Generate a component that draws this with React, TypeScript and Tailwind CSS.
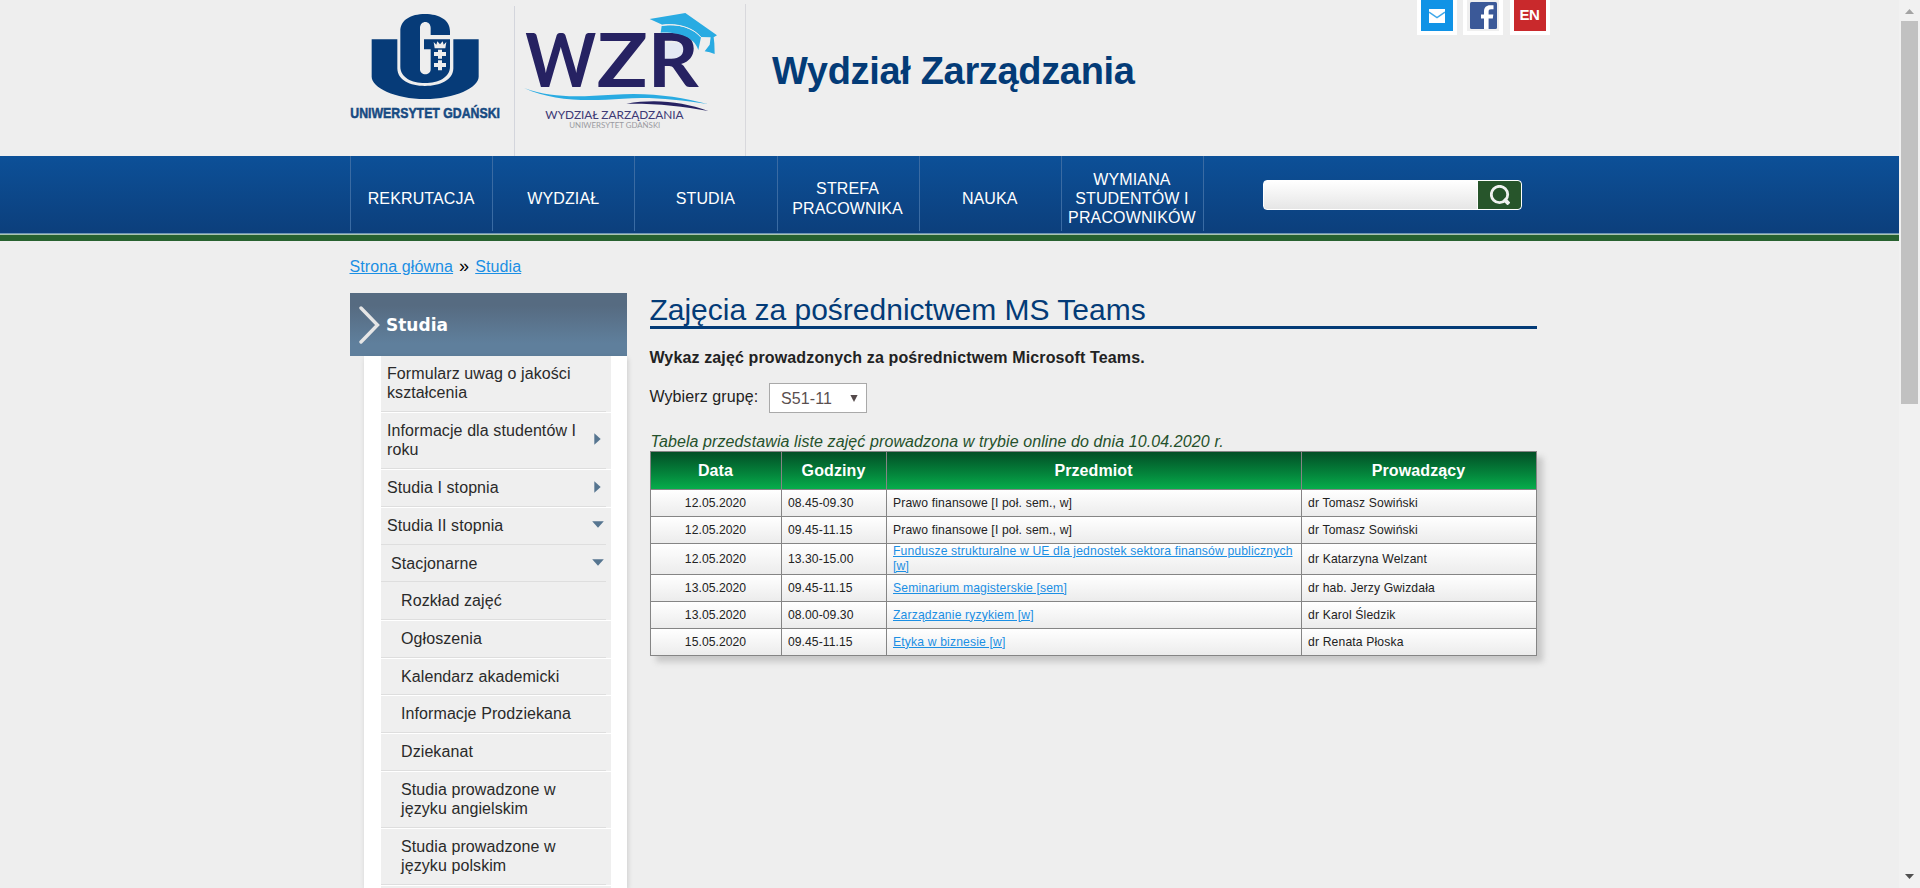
import React from "react";

const navItems = [
  "REKRUTACJA",
  "WYDZIAŁ",
  "STUDIA",
  "STREFA PRACOWNIKA",
  "NAUKA",
  "WYMIANA STUDENTÓW I PRACOWNIKÓW",
];

type MenuItem = { label: string; level: 1 | 2 | 3; arrow?: "right" | "down"; flush?: boolean };

const menu: MenuItem[] = [
  { label: "Formularz uwag o jakości kształcenia", level: 1 },
  { label: "Informacje dla studentów I roku", level: 1, arrow: "right" },
  { label: "Studia I stopnia", level: 1, arrow: "right" },
  { label: "Studia II stopnia", level: 1, arrow: "down", flush: true },
  { label: "Stacjonarne", level: 2, arrow: "down", flush: true },
  { label: "Rozkład zajęć", level: 3 },
  { label: "Ogłoszenia", level: 3 },
  { label: "Kalendarz akademicki", level: 3 },
  { label: "Informacje Prodziekana", level: 3 },
  { label: "Dziekanat", level: 3 },
  { label: "Studia prowadzone w języku angielskim", level: 3 },
  { label: "Studia prowadzone w języku polskim", level: 3 },
];

const indent = { 1: "pl-[6px]", 2: "pl-[10px]", 3: "pl-[20px]" };

type Lesson = { date: string; time: string; subject: string; teacher: string; link?: boolean };

const lessons: Lesson[] = [
  { date: "12.05.2020", time: "08.45-09.30", subject: "Prawo finansowe [I poł. sem., w]", teacher: "dr Tomasz Sowiński" },
  { date: "12.05.2020", time: "09.45-11.15", subject: "Prawo finansowe [I poł. sem., w]", teacher: "dr Tomasz Sowiński" },
  { date: "12.05.2020", time: "13.30-15.00", subject: "Fundusze strukturalne w UE dla jednostek sektora finansów publicznych [w]", teacher: "dr Katarzyna Welzant", link: true },
  { date: "13.05.2020", time: "09.45-11.15", subject: "Seminarium magisterskie [sem]", teacher: "dr hab. Jerzy Gwizdała", link: true },
  { date: "13.05.2020", time: "08.00-09.30", subject: "Zarządzanie ryzykiem [w]", teacher: "dr Karol Śledzik", link: true },
  { date: "15.05.2020", time: "09.45-11.15", subject: "Etyka w biznesie [w]", teacher: "dr Renata Płoska", link: true },
];

function UniversityLogo() {
  return (
    <svg className="block h-[130px] w-[154px]" viewBox="30 0 462 390">
      <path d="M95 118H172V205C172 240 210 258 255 258C300 258 340 240 340 205V118H416V230C416 262 345 297 255 297C165 297 95 262 95 230Z" fill="#063b78" />
      <path d="M181 200V94C181 60 212 42 255 42C298 42 330 60 330 94V105H272V84C272 60 240 60 240 84V208C240 228 272 228 272 208V148H252V118H330V200C330 232 295 249 255 249C215 249 181 232 181 200Z" fill="#063b78" />
      <g fill="#eeeeee">
        <path d="M281 126L289 134L292 124L300 133L308 124L311 134L319 126L316 145H284Z" />
        <path d="M294 149H306V156H318V168H306V176H294V168H282V156H294Z" />
        <path d="M294 181H306V189H318V201H306V211H294V201H282V189H294Z" />
      </g>
      <text x="31" y="355" textLength="449" lengthAdjust="spacingAndGlyphs" fill="#174a82" stroke="#174a82" strokeWidth="1.6" fontFamily="Liberation Sans, sans-serif" fontWeight="700" fontSize="46">
        UNIWERSYTET GDAŃSKI
      </text>
    </svg>
  );
}

function FacultyLogo() {
  return (
    <svg className="block h-[130px] w-[190px]" viewBox="550 0 570 390" overflow="visible">
      <path d="M965 128H1010C1045 128 1045 182 1010 182H965Z" fill="#e4e9f4" />
      <g fill="#262262" fontFamily="Lato, sans-serif" fontWeight="700" fontSize="221">
        <text x="557" y="261" textLength="213" lengthAdjust="spacingAndGlyphs">W</text>
        <text x="771" y="261" textLength="153" lengthAdjust="spacingAndGlyphs">Z</text>
        <text x="924" y="261" textLength="153" lengthAdjust="spacingAndGlyphs">R</text>
      </g>
      <g fill="#29abe2">
        <path d="M930 57L1037 39L1132 106L1122 112L1124 130L1125 162L1110 157L1095 154L1110 134L1113 112L1084 111C1062 84 1015 68 968 74Z" />
        <path d="M966 78C1012 70 1062 84 1084 112L1076 150C1066 118 1030 96 963 98Z" />
      </g>
      <path d="M967 76C1014 68 1062 84 1084 112" fill="none" stroke="#eeeeee" strokeWidth="3" />
      <path d="M553 264C640 296 720 290 820 284C930 276 1020 290 1104 312C1010 298 930 290 850 296C740 304 640 304 553 264Z" fill="#29abe2" />
      <path d="M860 311C950 296 1030 306 1106 333C1030 318 950 310 860 311Z" fill="#262262" />
      <text x="617" y="356" textLength="415" lengthAdjust="spacingAndGlyphs" fill="#3d3975" fontFamily="Lato, sans-serif" fontSize="36">
        WYDZIAŁ ZARZĄDZANIA
      </text>
      <text x="689" y="384" textLength="273" lengthAdjust="spacingAndGlyphs" fill="#9a9a9f" fontFamily="Lato, sans-serif" fontSize="23">
        UNIWERSYTET GDAŃSKI
      </text>
    </svg>
  );
}

function Header() {
  return (
    <header className="ml-[350px] flex h-[156px] w-[1200px] items-start">
      <div className="flex h-full w-[164px]">
        <UniversityLogo />
      </div>
      <div className="mt-[6px] h-[150px] w-px bg-[#d3d5dc]" />
      <div className="flex h-full w-[230px] pl-[8px]">
        <FacultyLogo />
      </div>
      <div className="mt-[4px] h-[152px] w-px bg-[#d8d8dc]" />
      <h1 className="mt-[49px] ml-[26px] text-[38px] leading-[44px] font-bold tracking-[-0.33px] whitespace-nowrap text-[#033b77]">
        Wydział Zarządzania
      </h1>
      <div className="ml-auto flex">
        <a className="block h-[35px] w-[40px] bg-white px-[4px] pb-[4px]">
          <span className="flex h-[31px] items-center justify-center bg-[#1093e6]">
            <svg className="h-[14px] w-[16px]" viewBox="0 0 16 14">
              <rect width="16" height="14" fill="#fff" />
              <path d="M0 3.2L8 8.6L16 3.2" fill="none" stroke="#3ea8ea" strokeWidth="1.5" />
            </svg>
          </span>
        </a>
        <a className="ml-[6px] block h-[35px] w-[40px] bg-white px-[4px] pb-[4px]">
          <span className="flex h-[31px] justify-center bg-[#efefef] pt-[2px]">
            <svg className="h-[27px] w-[27px]" viewBox="0 0 27 27">
              <rect width="27" height="27" rx="1.5" fill="#3b5998" />
              <path d="M14 27V16.5H11V12.5H14V9.5C14 5.5 16.5 3.3 20 3.3H23.5V7.3H21C19.3 7.3 18.6 8 18.6 9.7V12.5H23.3L22.8 16.5H18.6V27Z" fill="#fff" />
            </svg>
          </span>
        </a>
        <a className="ml-[7px] block h-[35px] w-[40px] bg-white px-[4px] pb-[4px]">
          <span className="flex h-[31px] items-center justify-center bg-[#c9292c] pr-px text-[15px] font-bold tracking-[-0.3px] text-white">EN</span>
        </a>
      </div>
    </header>
  );
}

function NavBar() {
  return (
    <nav className="flex h-[85px] flex-col">
      <div className="flex h-[77px] bg-linear-to-b from-[#0c5098] to-[#0c3f7c] pl-[350px]">
        <div className="flex h-[75px] w-[854px] border-l border-[#3a6ba3]">
          {navItems.map((item) => (
            <a key={item} className="flex flex-1 items-center justify-center border-r border-[#3a6ba3] pt-[10px] pr-px text-center text-[16px] leading-[19.2px] tracking-[0.13px] text-white">
              {item}
            </a>
          ))}
        </div>
        <form className="mt-[24px] ml-[59px] flex h-[30px] w-[259px] overflow-hidden rounded-[4px] border border-white bg-linear-to-b from-white to-[#e6e6e6]">
          <div className="w-[214px] border-r border-white" />
          <button type="button" className="flex flex-1 items-center justify-center rounded-r-[3px] bg-[#27552b]">
            <svg className="h-[20px] w-[20px]" viewBox="0 0 20 20" fill="none" stroke="#f0f2f0">
              <circle cx="9.5" cy="9.5" r="8.2" strokeWidth="2.8" />
              <path d="M14 14L19 19" strokeWidth="4" />
            </svg>
          </button>
        </form>
      </div>
      <div className="h-px bg-[#6d94b4]" />
      <div className="h-px bg-[#a9c4ad]" />
      <div className="h-[6px] bg-[#27612f]" />
    </nav>
  );
}

function Arrow({ dir }: { dir: "right" | "down" }) {
  return dir === "right" ? (
    <svg className="mt-[-2px] mr-[5px] h-[12px] w-[7px] shrink-0" viewBox="0 0 7 12">
      <path d="M0.3 0.3L6.7 6L0.3 11.7Z" fill="#567590" />
    </svg>
  ) : (
    <svg className="mt-[-2px] mr-[2.5px] h-[7px] w-[12px] shrink-0" viewBox="0 0 12 7">
      <path d="M0.2 0.3H11.8L6 6.7Z" fill="#567590" />
    </svg>
  );
}

function Sidebar() {
  return (
    <aside className="w-[277px] shrink-0">
      <div className="flex h-[63px] items-center bg-linear-to-b from-[#566b81] from-20% to-[#5f7f9c] to-80% pl-[9px]">
        <svg className="h-[38px] w-[21px]" viewBox="0 0 21 38">
          <path d="M2 2L18.5 19L2 36" fill="none" stroke="#e6e6e6" strokeWidth="3.4" strokeLinecap="round" />
        </svg>
        <h2 className="mt-[2px] ml-[6px] font-['DejaVu_Sans'] text-[17px] font-bold text-white">Studia</h2>
      </div>
      <ul className="ml-[14px] h-[532px] overflow-hidden bg-white pr-[16px] pl-[17px] shadow-[1px_2px_5px_rgba(0,0,0,0.14)]">
        {menu.map((m, i) => (
          <li key={m.label} className={`flex border-b bg-[#efefef] ${m.flush ? "border-[#efefef]" : "border-white"} ${i === 0 ? "pb-[0.3px]" : ""}`}>
            <a className={`flex w-[225px] items-center justify-between border-b border-[#dedede] pt-[8px] pb-[8.5px] text-[16px] leading-[19.2px] tracking-[0.09px] text-[#2a2a2a] ${indent[m.level]}`}>
              <span className="max-w-[194px]">{m.label}</span>
              {m.arrow && <Arrow dir={m.arrow} />}
            </a>
          </li>
        ))}
        <li className="h-[38px] bg-[#efefef]" />
      </ul>
    </aside>
  );
}

const cell = "border-r border-b border-[#858585] py-0 align-middle";

function Schedule() {
  return (
    <table className="w-[887px] table-fixed border-separate border-spacing-0 border-t border-l border-[#858585] shadow-[6px_6px_6px_#c8c8c8]">
      <colgroup>
        <col className="w-[131px]" />
        <col className="w-[105px]" />
        <col className="w-[415px]" />
        <col className="w-[235px]" />
      </colgroup>
      <thead>
        <tr className="h-[38px] text-[16px] leading-[19.2px] font-bold tracking-[0.1px] text-white">
          {["Data", "Godziny", "Przedmiot", "Prowadzący"].map((h) => (
            <th key={h} className={`${cell} bg-linear-to-b from-[#024f26] to-[#06ad4b] pr-px`}>{h}</th>
          ))}
        </tr>
      </thead>
      <tbody className="text-[12.16px] leading-[14.6px] tracking-[0.15px] text-[#222]">
        {lessons.map((l, i) => (
          <tr key={i} className={i === 2 ? "h-[31px]" : "h-[27px]"}>
            <td className={`${cell} bg-linear-to-b from-white to-[#ececec] pr-px text-center tracking-[0.05px]`}>{l.date}</td>
            <td className={`${cell} bg-linear-to-b from-white to-[#ececec] pl-[6px] tracking-[0.05px]`}>{l.time}</td>
            <td className={`${cell} bg-linear-to-b from-white to-[#ececec] pr-[5px] pl-[6px]`}>
              {l.link ? <a className="text-[#1b8fe4] underline">{l.subject}</a> : l.subject}
            </td>
            <td className={`${cell} bg-linear-to-b from-white to-[#ececec] pl-[6px]`}>{l.teacher}</td>
          </tr>
        ))}
      </tbody>
    </table>
  );
}

function Main() {
  return (
    <main className="ml-[23px] w-[887px] text-[16px] leading-[19px] text-[#222]">
      <h2 className="h-[36px] border-b-3 border-[#033b77] text-[30px] leading-[34px] text-[#033b77]">
        <span className="-ml-[0.6px]">Zajęcia za pośrednictwem MS Teams</span>
      </h2>
      <p className="mt-[19px] -ml-[0.6px] font-bold tracking-[0.135px]">Wykaz zajęć prowadzonych za pośrednictwem Microsoft Teams.</p>
      <div className="mt-[16px] flex h-[30px]">
        <label className="mt-[4px] -ml-[0.6px] w-[119.6px] tracking-[0.1px]">Wybierz grupę:</label>
        <div className="flex h-[30px] w-[98px] items-center justify-between border border-[#a9a9a9] bg-white pr-[8px] pl-[11px] text-[#5a4f50]">
          <span className="tracking-[0.1px]">S51-11</span>
          <svg className="h-[7px] w-[8px]" viewBox="0 0 8 7">
            <path d="M0.4 0H7.6L4 7Z" fill="#54494a" />
          </svg>
        </div>
      </div>
      <p className="mt-[19px] h-[19px] pl-[0.5px] tracking-[0.1px] text-[#25512b] italic">
        Tabela przedstawia liste zajęć prowadzona w trybie online do dnia 10.04.2020 r.
      </p>
      <Schedule />
    </main>
  );
}

function ScrollBar() {
  return (
    <div className="flex h-[888px] w-[21px] shrink-0 flex-col items-center bg-[#f1f1f1]">
      <svg className="mt-[9px] h-[5px] w-[9px]" viewBox="0 0 9 5">
        <path d="M0 5L4.5 0L9 5Z" fill="#a3a3a3" />
      </svg>
      <div className="mt-[7px] h-[383px] w-[17px] bg-[#c1c1c1]" />
      <svg className="mt-auto mb-[9px] h-[5px] w-[9px]" viewBox="0 0 9 5">
        <path d="M0 0H9L4.5 5Z" fill="#505050" />
      </svg>
    </div>
  );
}

export default function App() {
  return (
    <div className="flex h-[888px] w-[1920px] overflow-hidden bg-[#eeeeee] font-['Liberation_Sans',Arial,sans-serif]">
      <div className="flex w-[1899px] flex-col">
        <Header />
        <NavBar />
        <div className="ml-[349.5px] flex h-[52px] items-start pt-[16px] text-[16px] leading-[19px] tracking-[0.1px]">
          <a className="text-[#1b8fe4] underline">Strona główna</a>
          <span className="mx-[6px] text-[18px] text-black">»</span>
          <a className="text-[#1b8fe4] underline">Studia</a>
        </div>
        <div className="ml-[350px] flex">
          <Sidebar />
          <Main />
        </div>
      </div>
      <ScrollBar />
    </div>
  );
}
